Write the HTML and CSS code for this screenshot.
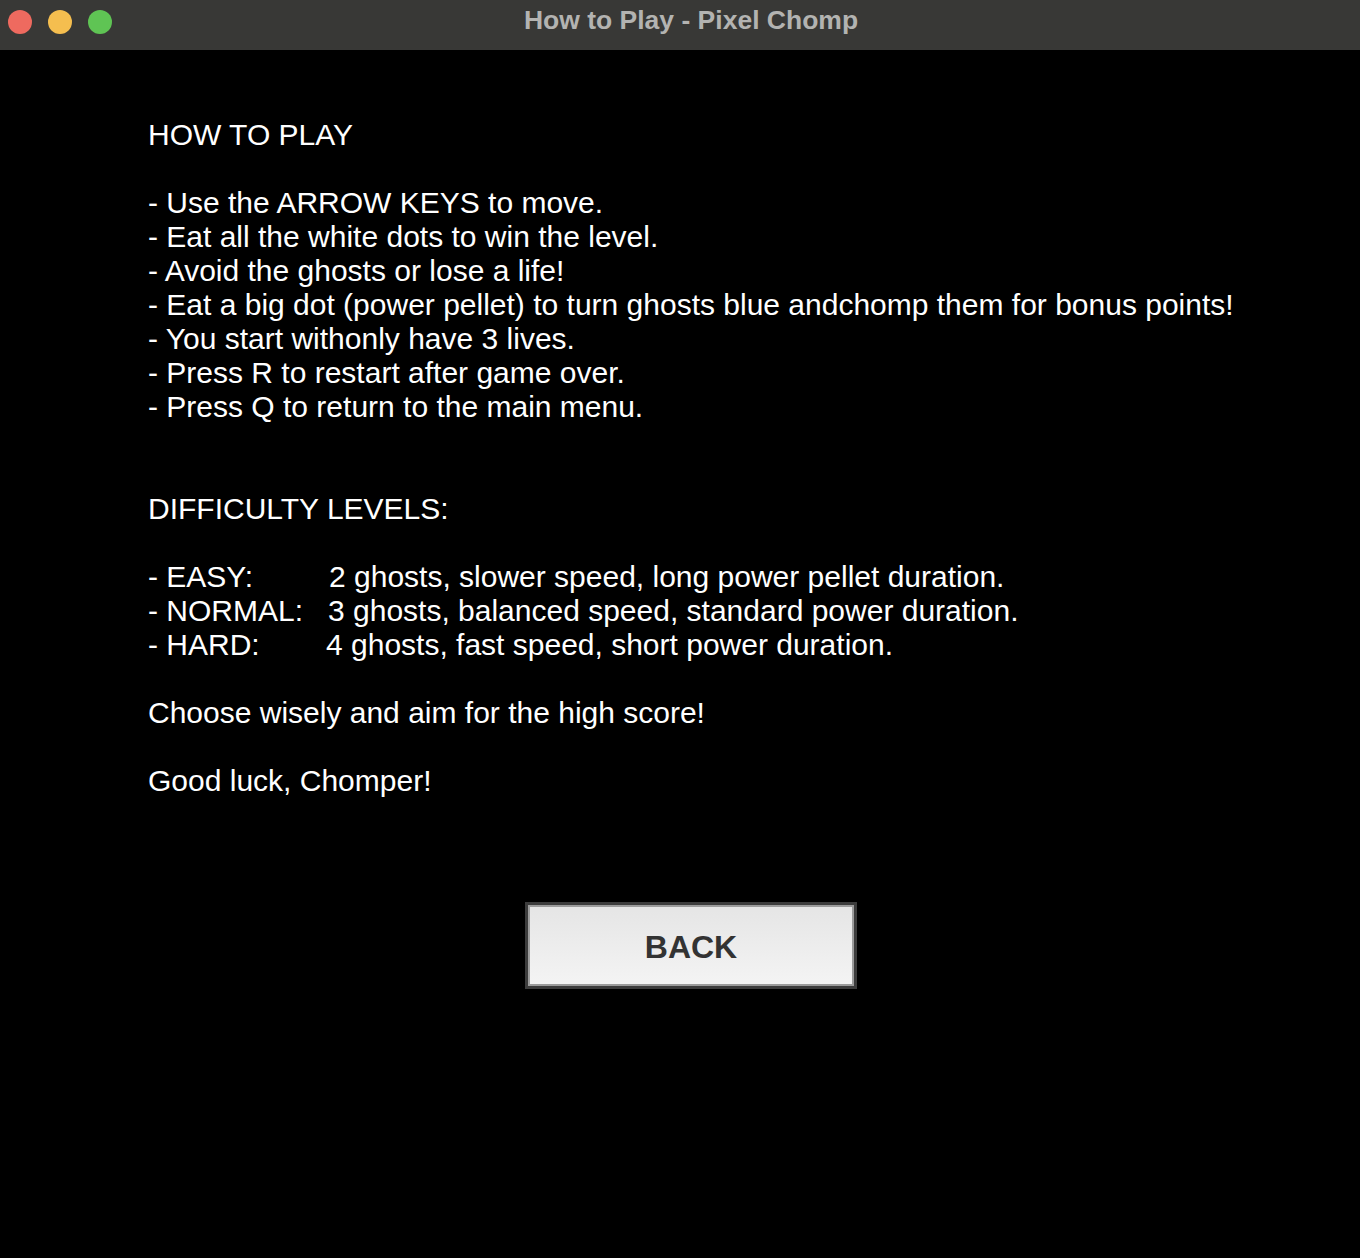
FILE: index.html
```html
<!DOCTYPE html>
<html>
<head>
<meta charset="utf-8">
<title>How to Play - Pixel Chomp</title>
<link rel="stylesheet" href="styles.css">
</head>
<body>
<div class="window">
  <header class="titlebar">
    <div class="lights">
      <span class="light red"></span>
      <span class="light yellow"></span>
      <span class="light green"></span>
    </div>
    <div class="title">How to Play - Pixel Chomp</div>
  </header>
  <main class="content">
    <div class="text">
      <p class="line">HOW TO PLAY</p>
      <p class="line blank"></p>
      <p class="line">- Use the ARROW KEYS to move.</p>
      <p class="line">- Eat all the white dots to win the level.</p>
      <p class="line">- Avoid the ghosts or lose a life!</p>
      <p class="line">- Eat a big dot (power pellet) to turn ghosts blue andchomp them for bonus points!</p>
      <p class="line">- You start withonly have 3 lives.</p>
      <p class="line">- Press R to restart after game over.</p>
      <p class="line">- Press Q to return to the main menu.</p>
      <p class="line blank"></p>
      <p class="line blank"></p>
      <p class="line">DIFFICULTY LEVELS:</p>
      <p class="line blank"></p>
      <p class="line"><span class="label">- EASY:</span><span class="desc easy">2 ghosts, slower speed, long power pellet duration.</span></p>
      <p class="line"><span class="label">- NORMAL:</span><span class="desc">3 ghosts, balanced speed, standard power duration.</span></p>
      <p class="line"><span class="label">- HARD:</span><span class="desc hard">4 ghosts, fast speed, short power duration.</span></p>
      <p class="line blank"></p>
      <p class="line">Choose wisely and aim for the high score!</p>
      <p class="line blank"></p>
      <p class="line">Good luck, Chomper!</p>
    </div>
    <div class="actions">
      <button class="back">BACK</button>
    </div>
  </main>
</div>
</body>
</html>
```
FILE: styles.css
```css
* { box-sizing: border-box; }
html, body {
  margin: 0;
  padding: 0;
  background: #000;
}
.window {
  width: 1360px;
  height: 1258px;
  display: flex;
  flex-direction: column;
  background: #000;
}
.titlebar {
  height: 50px;
  background: #383836;
  position: relative;
  display: flex;
  align-items: center;
  justify-content: center;
  flex-shrink: 0;
}
.lights {
  position: absolute;
  left: 8px;
  top: 10px;
  display: flex;
  gap: 16px;
}
.light {
  width: 24px;
  height: 24px;
  border-radius: 50%;
  display: block;
}
.red { background: #ee6a5f; }
.yellow { background: #f5be4f; }
.green { background: #5fc454; }
.title {
  font-family: "Liberation Sans", Arial, sans-serif;
  font-weight: bold;
  font-size: 26.5px;
  color: #b3b3b1;
  margin-top: -9px;
  margin-left: 22px;
}
.content {
  padding: 68px 0 0 148px;
  color: #fff;
  font-family: "Liberation Sans", Arial, sans-serif;
  font-size: 30px;
}
.text {
  display: flex;
  flex-direction: column;
}
.line {
  margin: 0;
  height: 34px;
  line-height: 34px;
  white-space: pre;
}
.label {
  display: inline-block;
  width: 180px;
}
.desc.easy { margin-left: 1px; }
.desc.hard { margin-left: -2px; }
.actions {
  display: flex;
  justify-content: flex-start;
  padding-left: 377px;
  margin-top: 104px;
}
.back {
  width: 332px;
  height: 87px;
  border: 3px solid #3c3c3c;
  box-shadow: inset 0 0 0 2px #9c9c9c;
  background: linear-gradient(#e5e5e5, #f4f4f4);
  font-family: "Liberation Sans", Arial, sans-serif;
  font-weight: bold;
  font-size: 32px;
  color: #333;
  padding: 0;
  padding-top: 3px;
  cursor: pointer;
}
```
